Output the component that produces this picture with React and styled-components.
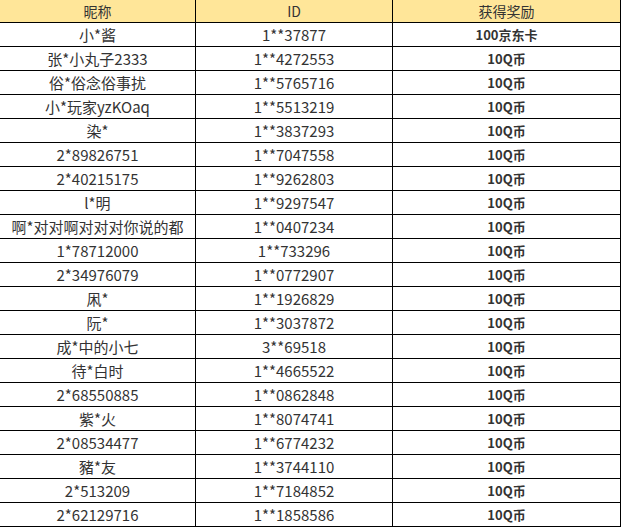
import React from "react";
import styled, { createGlobalStyle } from "styled-components";

const Global = createGlobalStyle`
  html, body { margin: 0; padding: 0; background: #fff; }
  body { font-family: "Noto Sans CJK SC", "Noto Sans", sans-serif; }
`;

const rows = [
  ["小*酱", "1**37877", "100京东卡"],
  ["张*小丸子2333", "1**4272553", "10Q币"],
  ["俗*俗念俗事扰", "1**5765716", "10Q币"],
  ["小*玩家yzKOaq", "1**5513219", "10Q币"],
  ["染*", "1**3837293", "10Q币"],
  ["2*89826751", "1**7047558", "10Q币"],
  ["2*40215175", "1**9262803", "10Q币"],
  ["l*明", "1**9297547", "10Q币"],
  ["啊*对对啊对对对你说的都", "1**0407234", "10Q币"],
  ["1*78712000", "1**733296", "10Q币"],
  ["2*34976079", "1**0772907", "10Q币"],
  ["凩*", "1**1926829", "10Q币"],
  ["阮*", "1**3037872", "10Q币"],
  ["成*中的小七", "3**69518", "10Q币"],
  ["待*白时", "1**4665522", "10Q币"],
  ["2*68550885", "1**0862848", "10Q币"],
  ["紫*火", "1**8074741", "10Q币"],
  ["2*08534477", "1**6774232", "10Q币"],
  ["豬*友", "1**3744110", "10Q币"],
  ["2*513209", "1**7184852", "10Q币"],
  ["2*62129716", "1**1858586", "10Q币"],
];

const Table = styled.div`
  display: grid;
  grid-template-columns: 196px 197px 228px;
  width: 621px;
`;

const Cell = styled.div`
  height: ${(p) => (p.$head ? "22px" : "23px")};
  border-right: 1px solid #000;
  border-bottom: 1px solid #000;
  background: ${(p) => (p.$head ? "#ffe699" : "#fff")};
  display: flex;
  align-items: center;
  justify-content: center;
  font-size: ${(p) => (p.$bold ? "13px" : p.$head ? "14px" : "15px")};
  font-weight: ${(p) => (p.$bold ? 700 : 400)};
  color: #333;
  white-space: nowrap;
  overflow: hidden;
  line-height: 1;
`;

export default function App() {
  return (
    <>
      <Global />
      <Table>
        <Cell $head>昵称</Cell>
        <Cell $head>ID</Cell>
        <Cell $head>获得奖励</Cell>
        {rows.map((r, i) => (
          <React.Fragment key={i}>
            <Cell>{r[0]}</Cell>
            <Cell>{r[1]}</Cell>
            <Cell $bold>{r[2]}</Cell>
          </React.Fragment>
        ))}
      </Table>
    </>
  );
}
